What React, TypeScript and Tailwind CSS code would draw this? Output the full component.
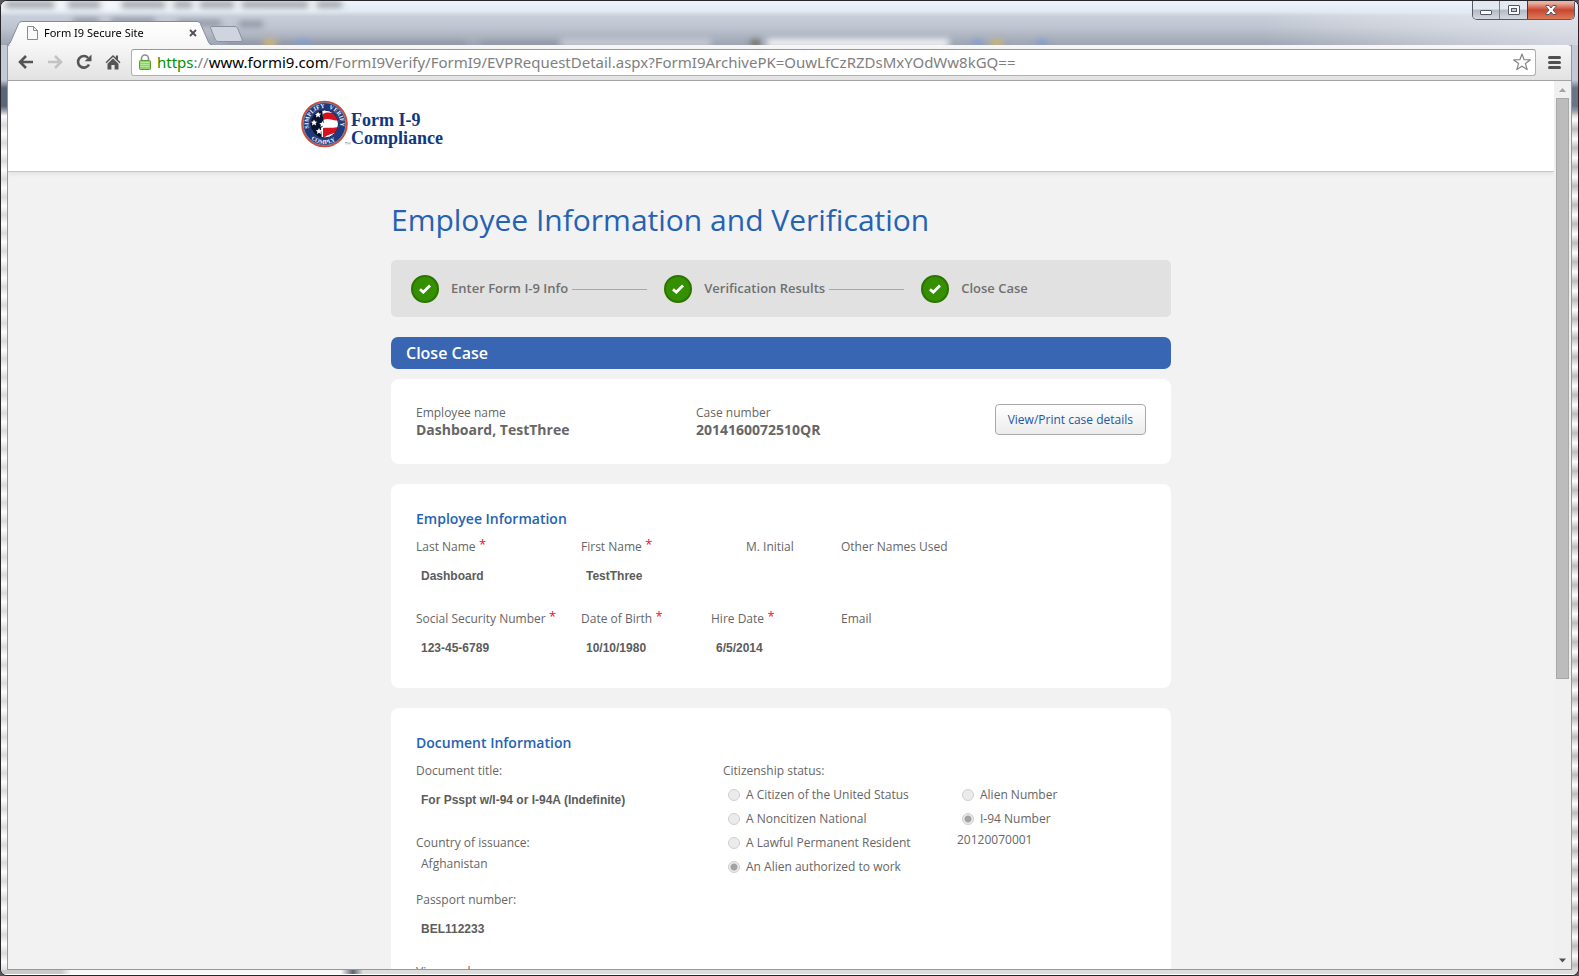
import { ReactNode } from 'react'

const sans = 'font-["Open_Sans","Noto_Sans",sans-serif]'

const WindowButtons = () => (
  <div className="relative flex h-[19px] self-start mr-[3px] rounded-b-[5px] border border-t-0 border-[#565a64] overflow-hidden">
    <button
      type="button"
      aria-label="Minimize"
      className="flex items-end justify-center w-[27px] pb-1 border-r border-[#7b808c] bg-linear-to-b from-[#e3e9f1] from-45% via-[#b4bac6] via-50% to-[#d3d8e0]"
    >
      <svg width="12" height="5" viewBox="0 0 12 5">
        <rect x="0.5" y="0.5" width="11" height="4" rx="0.5" fill="#fff" stroke="#535666" />
      </svg>
    </button>
    <button
      type="button"
      aria-label="Maximize"
      className="flex items-center justify-center w-[27px] bg-linear-to-b from-[#e3e9f1] from-45% via-[#b4bac6] via-50% to-[#d3d8e0]"
    >
      <svg width="12" height="10" viewBox="0 0 12 10">
        <rect x="0.5" y="0.5" width="11" height="9" rx="0.5" fill="#fff" stroke="#535666" />
        <rect x="3.5" y="3.5" width="5" height="3" fill="#c5cad4" stroke="#535666" />
      </svg>
    </button>
    <button
      type="button"
      aria-label="Close"
      className="flex items-center justify-center w-[47px] border-l border-[#6b2a22] bg-linear-to-b from-[#eab0a4] from-10% via-[#c8452c] via-50% to-[#dc7a5c]"
    >
      <svg width="12" height="10" viewBox="0 0 12 10">
        <path d="M1 .5h3l2 2.5L8 .5h3v1L8 5l3 3.500v1H8L6 7 4 9.500H1v-1L4 5 1 1.500z" fill="#fff" stroke="#535666" />
      </svg>
    </button>
  </div>
)

const TabStrip = () => (
  <div className="relative z-10 flex shrink-0 h-[44px] -mb-px pl-1.5 bg-[linear-gradient(to_bottom,#edf4fb_0,#e2eaf4_10px,#c9cfda_15px,#bfc5d0_26px,#a4abb9_40px,#9ea5b3_100%)]">
    {/* shapes of the windows behind the glass */}
    <svg className="absolute inset-0 size-full" aria-hidden="true">
      <defs>
        <filter id="glass" x="-20%" y="-60%" width="140%" height="220%">
          <feGaussianBlur stdDeviation="3" />
        </filter>
        <linearGradient id="sheen" x1="0" x2="1" y1="0" y2="0">
          <stop offset="0" stopColor="#fff" stopOpacity="0" />
          <stop offset="1" stopColor="#e8eaf2" stopOpacity="0.7" />
        </linearGradient>
      </defs>
      <g filter="url(#glass)">
        <rect x="0" y="2" width="340" height="7" fill="#fff" opacity="0.7" />
        <path d="M4 4h50M66 4h34M120 4h45M172 4h20M198 4h36M240 4h68M315 4h26" stroke="#555c66" strokeWidth="5" opacity="0.8" />
        <path d="M72 20h26M110 20h44M176 22h44M238 23h24" stroke="#59606e" strokeWidth="5" opacity="0.6" />
        <path d="M225 43h240M480 43h80" stroke="#69707c" strokeWidth="4" opacity="0.45" />
        <rect x="560" y="38" width="150" height="8" fill="#fff" opacity="0.4" />
        <rect x="766" y="38" width="182" height="8" fill="#fff" opacity="0.9" />
        <path d="M263 42h12M990 42h12" stroke="#e0bb55" strokeWidth="5" />
        <path d="M296 42h12M972 42h9M1036 42h10" stroke="#7397d6" strokeWidth="5" />
        <path d="M750 42h9" stroke="#5b5444" strokeWidth="5" />
      </g>
      <rect x="80%" y="10" width="20%" height="36" fill="url(#sheen)" />
    </svg>

    <div className="relative self-end flex items-center w-[206px] h-6 pl-5 pr-4">
      <svg className="absolute inset-0" width="206" height="24" viewBox="0 0 206 24" aria-hidden="true">
        <defs>
          <linearGradient id="tab" x1="0" x2="0" y1="0" y2="1">
            <stop offset="0" stopColor="#fff" />
            <stop offset="1" stopColor="#f7f7f7" />
          </linearGradient>
        </defs>
        <path d="M0 24c2 0 3-1 4-4l7-16c1-3 2-3.500 5-3.500h173c3 0 4 .5 5 3.500l7 16c1 3 2 4 4 4z" fill="url(#tab)" />
        <path d="M0 23.500c2 0 3-1 4-3.500l7-16c1-3 2-3.500 5-3.500h173c3 0 4 .5 5 3.500l7 16c1 2.500 2 3.500 4 3.500" fill="none" stroke="#848b96" />
      </svg>
      <svg className="relative" width="11" height="14" viewBox="0 0 11 14" aria-hidden="true">
        <path d="M.5.5h6l4 4v9H.5z" fill="#fafafa" stroke="#8b8b8b" />
        <path d="M6.500.5v4h4" fill="none" stroke="#8b8b8b" />
      </svg>
      <span className="relative grow ml-1.5 font-['Noto_Sans',sans-serif] text-[11px] leading-4 text-black">
        Form I9 Secure Site
      </span>
      <button type="button" aria-label="Close tab" className="relative">
        <svg width="8" height="8" viewBox="0 0 8 8">
          <path d="M1 1l6 6M7 1L1 7" stroke="#505050" strokeWidth="1.800" />
        </svg>
      </button>
    </div>
    <button type="button" aria-label="New tab" className="relative self-end mb-0.5 -ml-1">
      <svg width="34" height="17" viewBox="0 0 34 17">
        <path d="M3 .5h22c2 0 3 .5 4 2.500l4 10c.7 2-.3 2.500-2 2.500H10c-2 0-3-.5-4-2.500L2 3C1 1 1.500.5 3 .5z" fill="#cfd4de" stroke="#8a909c" />
      </svg>
    </button>
    <div className="grow" />
    <WindowButtons />
  </div>
)

const Toolbar = () => (
  <div className="flex items-center shrink-0 h-[37px] pl-2.5 pr-[10px] pb-px rounded-t-[3px] border-t border-[#737a86] border-b border-b-[#a3a3a3] bg-linear-to-b from-[#f7f7f7] to-[#e2e2e2]">
    <div className="flex gap-[13px]">
      <button type="button" aria-label="Back">
        <svg width="16" height="14" viewBox="0 0 16 14" fill="none" stroke="#555" strokeWidth="2.600">
          <path d="M15 7H3M8 1L2 7l6 6" />
        </svg>
      </button>
      <button type="button" aria-label="Forward">
        <svg width="16" height="14" viewBox="0 0 16 14" fill="none" stroke="#c2c2c2" strokeWidth="2.600">
          <path d="M1 7h12M8 1l6 6-6 6" />
        </svg>
      </button>
      <button type="button" aria-label="Reload">
        <svg width="16" height="16" viewBox="0 0 16 16">
          <path d="M13 10.500A5.800 5.800 0 1 1 12 3.800" fill="none" stroke="#555" strokeWidth="2.600" />
          <path d="M15.500.5v6.800H8.700z" fill="#555" />
        </svg>
      </button>
      <button type="button" aria-label="Home">
        <svg width="16" height="16" viewBox="0 0 16 16" fill="#555">
          <path d="M8 1l2.800 2.700V1.500H13v4.300L15.500 8.300l-1 1L8 3 1.500 9.300l-1-1z" />
          <path d="M8 4.500l5.500 5.200V15.500H9.600V11H6.400v4.500H2.500V9.700z" />
        </svg>
      </button>
    </div>

    <div className="relative flex items-center grow h-[27px] ml-2.5 pl-[7px] pr-1 rounded-[3px] border border-[#b0b0b0] border-t-[#989898] bg-white">
      <svg width="12" height="16" viewBox="0 0 12 16" aria-hidden="true">
        <path d="M2.500 7V4.500a3.500 3.500 0 0 1 7 0V7" fill="none" stroke="#8d8d8d" strokeWidth="1.600" />
        <rect x="0.500" y="6.500" width="11" height="9" rx="1" fill="#8fd36a" stroke="#55a02c" />
        <path d="M1.500 8.500h9M1.500 10.500h9M1.500 12.500h9" stroke="#b6e79c" />
      </svg>
      <div className="grow ml-1.5 font-['Noto_Sans',sans-serif] text-[15px] leading-5 text-[#808080] whitespace-nowrap">
        <span className="text-[#009100]">https</span>://
        <span className="text-black">www.formi9.com</span>
        /FormI9Verify/FormI9/EVPRequestDetail.aspx?FormI9ArchivePK=OuwLfCzRZDsMxYOdWw8kGQ==
      </div>
      <button type="button" aria-label="Bookmark this page">
        <svg width="18" height="18" viewBox="0 0 18 18" fill="#fff" stroke="#858585" strokeWidth="1.200" strokeLinejoin="round">
          <path d="M9 1l2.100 5.700 6.200.2-4.900 3.700 1.800 6L9 13.200l-5.200 3.400 1.800-6L.7 6.900l6.200-.2z" />
        </svg>
      </button>
    </div>
    <button type="button" aria-label="Menu" className="ml-3">
      <svg width="13" height="13" viewBox="0 0 13 13" stroke="#505050" strokeWidth="3" strokeLinecap="round">
        <path d="M1.500 1.500h10M1.500 6.500h10M1.500 11.500h10" />
      </svg>
    </button>
  </div>
)

const Logo = () => (
  <a href="#" className="flex items-center">
    <svg width="50" height="48" viewBox="0 0 50 48" aria-hidden="true">
      <defs>
        <path id="ring-left" d="M8 28.100A16 16 0 0 1 25 8" />
        <path id="ring-right" d="M27.900 8.600A16 16 0 0 1 38.500 29.500" />
        <path id="ring-bottom" d="M10.100 38.900A20 20 0 0 0 38.500 37" />
        <clipPath id="seal">
          <circle cx="23.500" cy="24" r="14" />
        </clipPath>
      </defs>
      <circle cx="23.500" cy="24" r="22.500" fill="#1f3a7c" stroke="#d2492f" strokeWidth="1.600" />
      <circle cx="23.500" cy="24" r="21.300" fill="none" stroke="#b6a8c0" strokeWidth="0.700" />
      <g clipPath="url(#seal)">
        <rect x="9" y="10" width="30" height="29" fill="#fff" />
        <path d="M22 14c6-4 11 1 17-1v7c-6 2-11-3-17 0zM22 25v3c5-1 11 1 17-2v4c-6 5-12 3-17 9v-6z" fill="#d5121e" />
        <path d="M9 9h12l1 8 1 8-3 3 1 12H9z" fill="#07112f" />
        <g fill="#fff">
          <path id="star" d="M17 11.500l1 2 2.200.2-1.600 1.500.5 2.200-2.100-1.200-2 1.200.4-2.200-1.600-1.500 2.200-.2z" />
          <use href="#star" x="-4" y="8" />
          <use href="#star" x="4.500" y="9.500" />
          <use href="#star" x="1" y="16.500" />
        </g>
      </g>
      <circle cx="23.500" cy="24" r="14" fill="none" stroke="#10235c" />
      <g fill="#f1f3fa" fontFamily="Liberation Serif, serif" fontWeight="700" fontSize="6">
        <text><textPath href="#ring-left">SIMPLIFY</textPath></text>
        <text><textPath href="#ring-right">VERIFY</textPath></text>
        <text><textPath href="#ring-bottom">COMPLY</textPath></text>
      </g>
      <path d="M44 42.500h2M45 42.500v2M47 44.500v-2l1 1 1-1v2" fill="none" stroke="#777" strokeWidth="0.500" />
    </svg>
    <span className="pt-2.5 font-['Liberation_Serif',serif] text-[18px] leading-[18px] font-bold text-[#0c3884]">
      Form I-9
      <br />
      Compliance
    </span>
  </a>
)

const Step = ({ label, last }: { label: string; last?: boolean }) => (
  <li className="flex items-center">
    <span className="flex items-center justify-center size-7 mr-3 rounded-full border-2 border-[#2c7400] bg-[#349000]">
      <svg width="12" height="10" viewBox="0 0 12 10" fill="none" stroke="#fff" strokeWidth="2.800">
        <path d="M1 5.200l3.300 3L11 1.400" />
      </svg>
    </span>
    {label}
    {!last && <span className="w-[75px] h-px mt-0.5 ml-1 mr-[17px] bg-[#a8a8a8]" />}
  </li>
)

const Card = ({ title, className, children }: { title?: string; className?: string; children: ReactNode }) => (
  <section className={`px-[25px] rounded-lg bg-white ${className}`}>
    {title && <h3 className="pt-[25px] text-[14px] leading-5 font-semibold text-[#2562b3]">{title}</h3>}
    {children}
  </section>
)

interface FieldProps {
  id: string
  label: string
  value?: string
  required?: boolean
  className?: string
}

const Field = ({ id, label, value = '', required, className }: FieldProps) => (
  <div className={`h-[72px] ${className}`}>
    <label htmlFor={id} className="block h-5 leading-5 whitespace-nowrap">
      {label}
      {required && <span className="relative -top-0.5 text-[13px] leading-none text-[#e8112d]"> *</span>}
    </label>
    <input
      id={id}
      readOnly
      defaultValue={value}
      className="block w-full h-5 mt-[9px] px-[5px] bg-transparent outline-none font-['Liberation_Sans',sans-serif] text-[12px] font-bold text-[#5c5c5c]"
    />
  </div>
)

const Radio = ({ name, label, checked }: { name: string; label: string; checked?: boolean }) => (
  <label className="flex items-center h-6">
    <input
      type="radio"
      name={name}
      disabled
      defaultChecked={checked}
      className="appearance-none size-3 mr-1.5 rounded-full border border-[#cfcfcf] bg-[#ebebeb] checked:bg-[radial-gradient(circle,#a3a3a3_3px,#ebebeb_4px)]"
    />
    {label}
  </label>
)

const Scrollbar = () => (
  <div className="flex flex-col items-center w-[17px] shrink-0 bg-[#f0f0f0]" aria-hidden="true">
    <svg width="17" height="17" viewBox="0 0 17 17">
      <path d="M5 11l3.500-4 3.500 4z" fill="#a3a3a3" />
    </svg>
    <div className="w-[13px] grow-[68] border border-[#a8a8a8] bg-[#bcbcbc]" />
    <div className="grow-[32]" />
    <svg width="17" height="17" viewBox="0 0 17 17">
      <path d="M5 6.500l3.500 4 3.500-4z" fill="#505050" />
    </svg>
  </div>
)

const Page = () => (
  <main className={`grow overflow-hidden bg-[#f2f2f2] text-[12px] text-[#666] ${sans}`}>
    <header className="h-[91px] border-b border-[#c6c6c6] bg-white shadow-[0_2px_4px_rgba(0,0,0,0.07)]">
      <div className="flex max-w-[960px] mx-auto pt-[19px] pb-6">
        <Logo />
      </div>
    </header>

    <div className="max-w-[780px] mx-auto">
      <h1 className="pt-7 text-[30px] leading-10 text-[#2562b3]">Employee Information and Verification</h1>

      <ol className="flex items-center h-[57px] mt-5 px-5 rounded-[5px] bg-[#e1e1e1] text-[13px] font-semibold text-[#707070]">
        <Step label="Enter Form I-9 Info" />
        <Step label="Verification Results" />
        <Step label="Close Case" last />
      </ol>

      <h2 className="h-8 mt-5 px-[15px] rounded-[7px] bg-[#3866b3] text-[16px] leading-8 font-semibold text-white">
        Close Case
      </h2>

      <Card className="flex h-[85px] mt-2.5 pt-[25px]">
        <div className="w-[280px]">
          <p className="leading-[18px]">Employee name</p>
          <p className="text-[14px] leading-4 font-bold">Dashboard, TestThree</p>
        </div>
        <div>
          <p className="leading-[18px]">Case number</p>
          <p className="text-[14px] leading-4 font-bold">2014160072510QR</p>
        </div>
        <button
          type="button"
          className="h-[31px] ml-auto px-3 rounded border border-[#a9a9a9] bg-linear-to-b from-white to-[#ececec] text-[12px] font-medium text-[#2356a3]"
        >
          View/Print case details
        </button>
      </Card>

      <Card title="Employee Information" className="h-[204px] mt-5">
        <div className="flex pt-2">
          <Field id="last-name" label="Last Name" value="Dashboard" required className="w-[165px]" />
          <Field id="first-name" label="First Name" value="TestThree" required className="w-[165px]" />
          <Field id="initial" label="M. Initial" className="w-[95px]" />
          <Field id="other-names" label="Other Names Used" className="w-[200px]" />
        </div>
        <div className="flex">
          <Field id="ssn" label="Social Security Number" value="123-45-6789" required className="w-[165px]" />
          <Field id="birth" label="Date of Birth" value="10/10/1980" required className="w-[130px]" />
          <Field id="hire" label="Hire Date" value="6/5/2014" required className="w-[130px]" />
          <Field id="email" label="Email" className="w-[200px]" />
        </div>
      </Card>

      <Card title="Document Information" className="mt-5 pb-6">
        <div className="flex pt-2">
          <div className="w-[307px]">
            <Field id="document" label="Document title:" value="For Psspt w/I-94 or I-94A (Indefinite)" className="w-[280px]" />
            <div className="h-[57px] leading-5">
              <p>Country of issuance:</p>
              <p className="pt-px pl-[5px]">Afghanistan</p>
            </div>
            <Field id="passport" label="Passport number:" value="BEL112233" className="w-[280px]" />
            <Field id="visa" label="Visa number:" className="w-[280px]" />
          </div>
          <fieldset>
            <legend className="h-[22px] leading-5">Citizenship status:</legend>
            <div className="flex pl-[5px]">
              <div className="w-[229px]">
                <Radio name="status" label="A Citizen of the United Status" />
                <Radio name="status" label="A Noncitizen National" />
                <Radio name="status" label="A Lawful Permanent Resident" />
                <Radio name="status" label="An Alien authorized to work" checked />
              </div>
              <div>
                <div className="pl-[5px]">
                  <Radio name="number-type" label="Alien Number" />
                  <Radio name="number-type" label="I-94 Number" checked />
                </div>
                <p className="leading-[18px]">20120070001</p>
              </div>
            </div>
          </fieldset>
        </div>
      </Card>
    </div>
  </main>
)

export default function App() {
  return (
    <div className="h-screen bg-[#55565a]">
      <div className="flex flex-col h-full rounded-[7px] border border-[#26262a] bg-[#e2e2e2] overflow-hidden">
        <TabStrip />
        <div className="flex grow min-h-0">
          <div className="w-1.5 shrink-0 bg-[linear-gradient(to_bottom,#c3c9d5_0,#c3c9d5_36px,#5b6579_44px,#5b6579_62px,#fff0_72px),repeating-linear-gradient(to_bottom,#fdfdfd_0,#dddada_9px,#fdfdfd_18px)]" />
          <div className="flex flex-col grow min-w-0 border-x border-b border-[#979797]">
            <Toolbar />
            <div className="flex grow min-h-0">
              <Page />
              <Scrollbar />
            </div>
          </div>
          <div className="w-1.5 shrink-0 bg-[linear-gradient(to_bottom,#c3c9d5_0,#c3c9d5_36px,#6b7485_44px,#6b7485_62px,#fff0_72px),repeating-linear-gradient(to_bottom,#fdfdfd_0,#bdbdbd_9px,#fdfdfd_19px)]" />
        </div>
        <div className="h-[5px] shrink-0 border-b border-white bg-[linear-gradient(to_right,#c9c9c9_0,#c9c9c9_60px,#f8f8f8_70px,#f8f8f8_340px,#5d6472_352px,#dcdddc_362px)]" />
      </div>
    </div>
  )
}
